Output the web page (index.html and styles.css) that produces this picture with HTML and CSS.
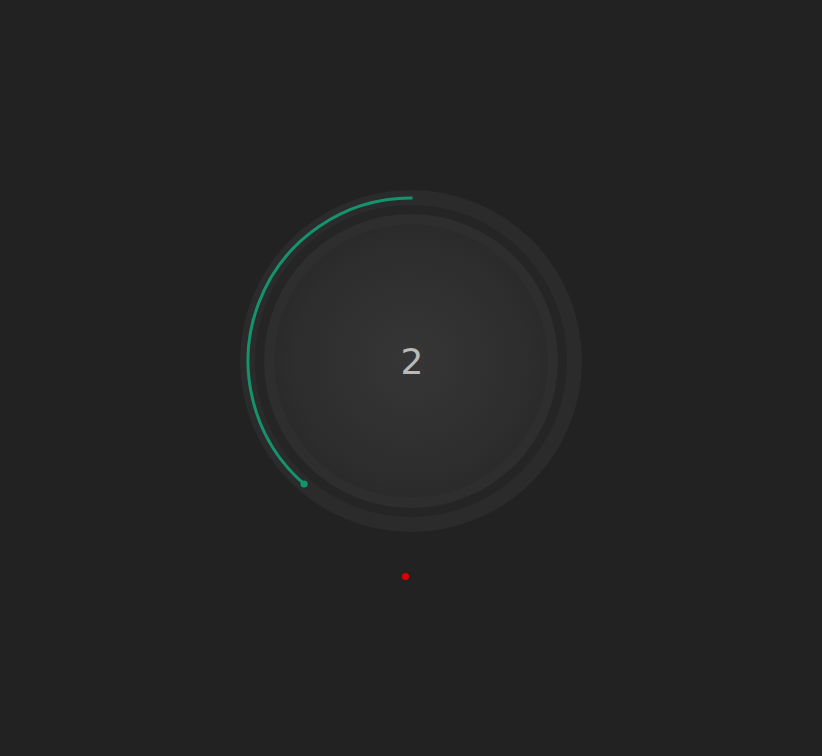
FILE: index.html
```html
<!DOCTYPE html>
<html>
<head>
<meta charset="utf-8">
<link rel="stylesheet" href="styles.css">
</head>
<body>
<main class="stage">
  <div class="knob">
    <div class="ring-outer">
      <div class="ring-gap">
        <div class="ring-inner">
          <div class="disc"><span class="value">2</span></div>
        </div>
      </div>
    </div>
    <svg class="arc" viewBox="0 0 342 342" width="342" height="342">
      <path d="M 172.5 8.01 A 163 163 0 0 0 64.1 294.0" fill="none" stroke="#14936d" stroke-width="3"/>
      <circle cx="64.1" cy="294.0" r="3.6" fill="#14936d"/>
    </svg>
  </div>
  <div class="status-dot"></div>
</main>
</body>
</html>
```
FILE: styles.css
```css
html, body {
  margin: 0;
  padding: 0;
  background: #222222;
  height: 100%;
}
.stage {
  display: flex;
  flex-direction: column;
  align-items: center;
  padding-top: 190px;
}
.knob {
  position: relative;
  width: 342px;
  height: 342px;
}
.ring-outer {
  width: 342px;
  height: 342px;
  border-radius: 50%;
  background: #2b2b2b;
  display: flex;
  align-items: center;
  justify-content: center;
}
.ring-gap {
  width: 312px;
  height: 312px;
  border-radius: 50%;
  background: #252525;
  display: flex;
  align-items: center;
  justify-content: center;
}
.ring-inner {
  width: 294px;
  height: 294px;
  border-radius: 50%;
  background: #2e2e2e;
  display: flex;
  align-items: center;
  justify-content: center;
}
.disc {
  width: 274px;
  height: 274px;
  border-radius: 50%;
  background: radial-gradient(circle at 50% 50%, #363636 0%, #2d2d2d 60%, #242424 100%);
  display: flex;
  align-items: center;
  justify-content: center;
}
.value {
  font-family: "DejaVu Sans", sans-serif;
  font-size: 36px;
  color: #b9b9b9;
  line-height: 1;
  margin-left: 2px;
  margin-top: 2px;
}
.arc {
  position: absolute;
  left: 0;
  top: 0;
}
.status-dot {
  width: 7px;
  height: 7px;
  border-radius: 50%;
  background: #e00000;
  margin-top: 41px;
  margin-left: -12px;
}
```
